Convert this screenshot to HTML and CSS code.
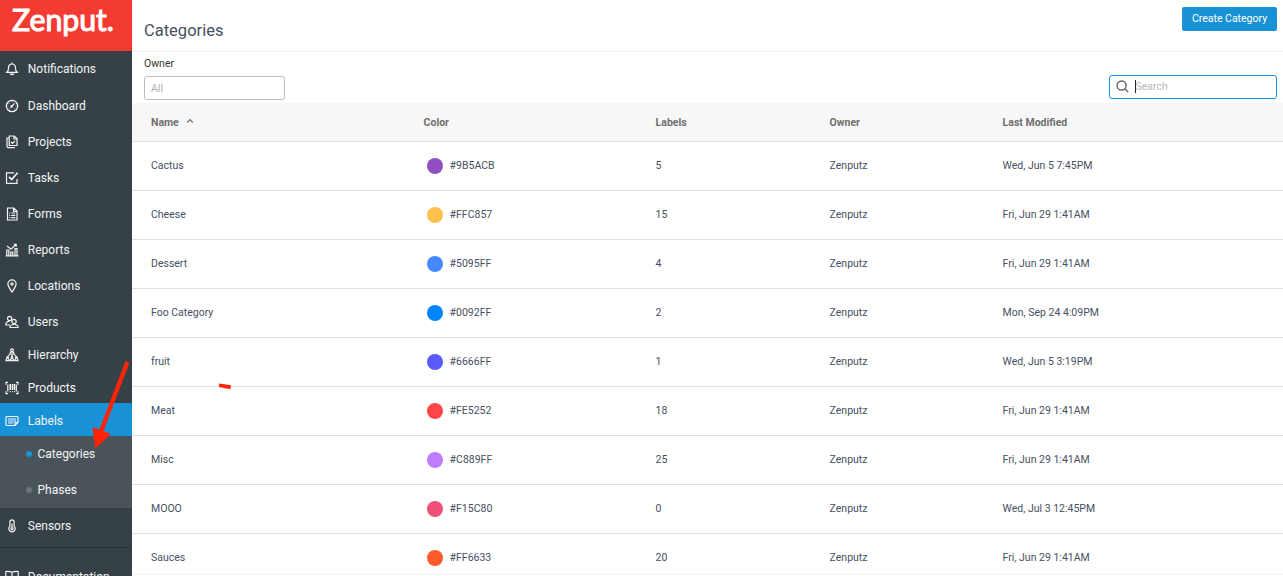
FILE: index.html
```html
<!DOCTYPE html>
<html lang="en">
<head>
  <meta charset="UTF-8">
  <meta name="viewport" content="width=device-width, initial-scale=1.0">
  <title>Categories</title>
  <link rel="stylesheet" href="styles.css">
</head>
<body>

<div class="app">
  <nav class="sidebar">
    <a class="brand" href="#">
      <svg width="132" height="51" viewBox="0 0 132 51"><text class="brand-text" x="12" y="31" textLength="102" lengthAdjust="spacingAndGlyphs">Zenput.</text></svg>
    </a>
    <a class="nav-item" href="#">
      <svg class="icon" viewBox="0 0 14 14"><path d="M.8 10.300h12.400M2 10.300c1.300-1 1.500-2.300 1.500-4.300C3.500 3.500 5 2 7 2s3.500 1.500 3.500 4c0 2 .2 3.300 1.500 4.300M7 .6V2M5.500 12c.5 1 2.500 1 3 0z"/></svg>
      <span>Notifications</span>
    </a>
    <a class="nav-item nav-item-dashboard" href="#">
      <svg class="icon" viewBox="0 0 14 14"><circle cx="7" cy="7" r="5.700"/><path d="M6.500 7.500l3-3.200M7 2.500v.7M3.800 3.800l.5.500M2.500 7h.8M10.800 7h.8M4 9.800l.4-.3M9.800 9.800l-.3-.3"/><circle cx="6.500" cy="7.600" r=".7"/></svg>
      <span>Dashboard</span>
    </a>
    <a class="nav-item" href="#">
      <svg class="icon" viewBox="0 0 14 14"><path d="M4.200 1h5l2.800 2.600V10.500H4.200zM9 1v3h3M4 3H2v8c0 1 .5 1.700 1.500 1.700h6.300M6 7l1.500 1.500L10 6"/></svg>
      <span>Projects</span>
    </a>
    <a class="nav-item" href="#">
      <svg class="icon" viewBox="0 0 14 14"><path d="M9 1.800H1.500v10.500H12V8"/><path class="bold" d="M4 5.800l2.700 2.700L12.600 1.700"/></svg>
      <span>Tasks</span>
    </a>
    <a class="nav-item" href="#">
      <svg class="icon" viewBox="0 0 14 14"><path d="M2.500 1h6.300L12 4v9H2.500zM8.500 1v3.300H12M4.300 6h1M6.300 6h4M4.300 8.300h1M6.300 8.300h4M4.300 10.600h1M6.300 10.600h4"/></svg>
      <span>Forms</span>
    </a>
    <a class="nav-item" href="#">
      <svg class="icon" viewBox="0 0 14 14"><path d="M.7 12.800h12.800M1.800 12.500V7h2v5.500M5.800 12.500V9h2v3.500M10 12.500V5.500h2v7M2 3l4 3.300L11 1.500M8.800 1.300h2.400v2.400"/></svg>
      <span>Reports</span>
    </a>
    <a class="nav-item" href="#">
      <svg class="icon" viewBox="0 0 14 14"><path d="M7 13C5 9.800 2.900 7.500 2.900 5a4.100 4.100 0 0 1 8.200 0c0 2.500-2.100 4.800-4.100 8z"/><circle cx="7" cy="5" r="1.100"/></svg>
      <span>Locations</span>
    </a>
    <a class="nav-item nav-item-users" href="#">
      <svg class="icon" viewBox="0 0 14 14"><circle cx="4.600" cy="3.500" r="2.100"/><circle cx="9" cy="6.500" r="2.200"/><path d="M5 12.500c0-2 1.500-3 4-3s4.200 1 4.200 3zM5 10H.8c0-2.200 1-3.500 3.800-3.800"/></svg>
      <span>Users</span>
    </a>
    <a class="nav-item nav-item-short" href="#">
      <svg class="icon" viewBox="0 0 14 14"><circle cx="7" cy="2.200" r="1.400"/><path d="M5 6c0-1.500.7-2.200 2-2.200S9 4.500 9 6zM7 6v3M5 6L3 8.500M9 6l2 2.500M1 12.700c0-1.500.5-2.200 1.600-2.200s1.600.7 1.600 2.200zM5.400 12.700c0-1.500.5-2.200 1.600-2.200s1.600.7 1.600 2.200zM9.800 12.700c0-1.500.5-2.200 1.600-2.200s1.600.7 1.600 2.200z"/><circle cx="2.600" cy="9.500" r=".8"/><circle cx="7" cy="9.500" r=".8"/><circle cx="11.400" cy="9.500" r=".8"/></svg>
      <span>Hierarchy</span>
    </a>
    <a class="nav-item nav-item-products" href="#">
      <svg class="icon" viewBox="0 0 14 14"><path d="M3 1.300H1v2.500M11 1.300h2v2.500M3 12.700H1v-2.500M11 12.700h2v-2.500M2.800 3.500v7M11.300 3.500v7M7.400 3v6"/><path class="bold" d="M5.300 3v6M9.400 3v6"/><path d="M4.700 10.700h1M7 10.700h.8M9 10.700h1"/></svg>
      <span>Products</span>
    </a>
    <a class="nav-item nav-item-short active" href="#">
      <svg class="icon" viewBox="0 0 14 14"><path d="M2 2.500h10c.6 0 1 .4 1 1v5l-3 3H2c-.6 0-1-.4-1-1v-7c0-.6.4-1 1-1zM13 8.500h-3v3M3 5h8M3 7h8M3 9h5"/></svg>
      <span>Labels</span>
    </a>
    <div class="submenu">
      <a class="submenu-item current" href="#">Categories</a>
      <a class="submenu-item" href="#">Phases</a>
    </div>
    <a class="nav-item" href="#">
      <svg class="icon" viewBox="0 0 14 14"><path d="M4.900 7.300V3a2.100 2.100 0 0 1 4.200 0v4.300a3.200 3.200 0 1 1-4.200 0zM7 4.500v4"/><circle cx="7" cy="9.800" r="1.100"/></svg>
      <span>Sensors</span>
    </a>
    <a class="nav-item nav-item-docs" href="#">
      <svg class="icon" viewBox="0 0 14 14"><path d="M7 2.300C5.500 1.500 3 1.300.8 1.500v10C3 11.200 5.500 11.500 7 12.500c1.500-1 4-1.300 6.200-1v-10C11 1.300 8.500 1.500 7 2.300zM7 2.300v10"/></svg>
      <span>Documentation</span>
    </a>
  </nav>

  <main class="content">
    <header class="page-header">
      <h1 class="page-title">Categories</h1>
      <button class="create-button" type="button">Create Category</button>
    </header>

    <div class="filters">
      <div class="filter-group">
        <label for="owner">Owner</label>
        <input type="text" id="owner" class="owner-input" placeholder="All">
      </div>
      <div class="search-box">
        <svg class="search-icon" viewBox="0 0 14 14"><circle cx="6" cy="6" r="4.900"/><path d="M9.500 9.500L13 13"/></svg>
        <span class="caret"></span>
        <span class="search-placeholder">Search</span>
      </div>
    </div>

    <div class="table-wrap">
      <table class="category-table">
        <colgroup>
          <col class="col-name"><col class="col-color"><col class="col-labels"><col class="col-owner"><col>
        </colgroup>
        <thead>
          <tr>
            <th>Name <svg class="sort-icon" viewBox="0 0 8 6"><path d="M1.200 4.500L4 1.700l2.800 2.800"/></svg></th>
            <th>Color</th><th>Labels</th><th>Owner</th><th>Last Modified</th>
          </tr>
        </thead>
        <tbody>
          <tr><td>Cactus</td><td class="color-cell"><span class="swatch purple"></span>#9B5ACB</td><td>5</td><td>Zenputz</td><td>Wed, Jun 5 7:45PM</td></tr>
          <tr><td>Cheese</td><td class="color-cell"><span class="swatch yellow"></span>#FFC857</td><td>15</td><td>Zenputz</td><td>Fri, Jun 29 1:41AM</td></tr>
          <tr><td>Dessert</td><td class="color-cell"><span class="swatch light-blue"></span>#5095FF</td><td>4</td><td>Zenputz</td><td>Fri, Jun 29 1:41AM</td></tr>
          <tr><td>Foo Category</td><td class="color-cell"><span class="swatch blue"></span>#0092FF</td><td>2</td><td>Zenputz</td><td>Mon, Sep 24 4:09PM</td></tr>
          <tr><td>fruit</td><td class="color-cell"><span class="swatch indigo"></span>#6666FF</td><td>1</td><td>Zenputz</td><td>Wed, Jun 5 3:19PM</td></tr>
          <tr><td>Meat</td><td class="color-cell"><span class="swatch red"></span>#FE5252</td><td>18</td><td>Zenputz</td><td>Fri, Jun 29 1:41AM</td></tr>
          <tr><td>Misc</td><td class="color-cell"><span class="swatch violet"></span>#C889FF</td><td>25</td><td>Zenputz</td><td>Fri, Jun 29 1:41AM</td></tr>
          <tr><td>MOOO</td><td class="color-cell"><span class="swatch pink"></span>#F15C80</td><td>0</td><td>Zenputz</td><td>Wed, Jul 3 12:45PM</td></tr>
          <tr><td>Sauces</td><td class="color-cell"><span class="swatch orange"></span>#FF6633</td><td>20</td><td>Zenputz</td><td>Fri, Jun 29 1:41AM</td></tr>
        </tbody>
      </table>
    </div>
  </main>
</div>

<!-- Arrow and mark drawn over the page -->
<svg class="annotation" width="240" height="400" viewBox="0 0 240 400">
  <path d="M125.500 361l4 1.500-26 68.500 7.300 3-15.500 14.500L92.400 427l7 2.500z"/>
  <path d="M219.200 383.500l11.800 1.800-.7 4-11.500-2.300z"/>
</svg>

</body>
</html>
```
FILE: styles.css
```css
* {
  box-sizing: border-box;
}

body {
  margin: 0;
  font-family: Roboto, sans-serif;
  background-color: #fff;
  color: #465061;
  overflow: hidden;
}

a {
  text-decoration: none;
}

.app {
  display: flex;
  height: 576px;
  overflow: hidden;
}

/* Sidebar */
.sidebar {
  flex: 0 0 132px;
  background-color: #364147;
  overflow: hidden;
}

.brand {
  display: block;
  height: 51px;
  background-color: #f43b32;
}

.brand svg {
  display: block;
}

.brand-text {
  font-family: Lato, sans-serif;
  font-size: 31px;
  fill: #fff;
  stroke: #fff;
  stroke-width: 1.1;
  stroke-linejoin: round;
}

.nav-item {
  display: flex;
  align-items: center;
  height: 36px;
  padding-left: 5px;
  gap: 8.8px;
  color: #f2f4f5;
  font-size: 12px;
}

.nav-item-dashboard {
  height: 37px;
}

.nav-item-users {
  height: 34px;
  padding-top: 2px;
}

.nav-item-short {
  height: 33px;
}

.nav-item-products {
  height: 32px;
  padding-top: 1px;
}

.nav-item.active {
  padding-top: 2px;
  background-color: #1991d6;
}

.nav-item-docs {
  height: 58px;
  margin-top: 3px;
  border-top: 1px solid #2c353a;
}

.icon {
  width: 14px;
  height: 14px;
  fill: none;
  stroke: #f2f4f5;
  stroke-width: 1.2;
}

.icon .bold {
  stroke-width: 1.7;
}

.submenu {
  background-color: #4a535a;
}

.submenu-item {
  display: flex;
  align-items: center;
  height: 36px;
  padding-left: 26px;
  gap: 5.5px;
  color: #f2f4f5;
  font-size: 12px;
}

.submenu-item::before {
  content: "";
  width: 6px;
  height: 6px;
  border-radius: 50%;
  background-color: #707274;
}

.submenu-item.current::before {
  background-color: #1991d6;
}

/* Page header */
.content {
  flex: 1;
}

.page-header {
  display: flex;
  justify-content: space-between;
  align-items: flex-start;
  height: 52px;
  padding: 7px 6px 0 12px;
  border-bottom: 1px solid #f0f0f0;
}

.page-title {
  margin: 14px 0 0;
  font-size: 16.5px;
  font-weight: normal;
  line-height: 19px;
}

.create-button {
  width: 95px;
  height: 24px;
  padding: 0 0 1px;
  border: none;
  border-radius: 2px;
  background-color: #1991d6;
  color: #fff;
  font-family: inherit;
  font-size: 10.5px;
  white-space: nowrap;
}

/* Filters */
.filters {
  display: flex;
  justify-content: space-between;
  height: 51px;
  padding: 5px 6px 0 12px;
}

.filter-group label {
  display: block;
  margin-bottom: 5px;
  color: #333;
  font-size: 10.5px;
  line-height: 14px;
}

.owner-input {
  display: block;
  width: 141px;
  height: 24px;
  padding: 0 6px;
  border: 1px solid #bdbdbd;
  border-radius: 3px;
  font-family: inherit;
  font-size: 10.5px;
}

.owner-input::placeholder {
  color: #b0b0b0;
}

.search-box {
  display: flex;
  align-items: center;
  width: 168px;
  height: 24px;
  margin-top: 18px;
  padding: 0 0 1px 6px;
  border: 1px solid #1991d6;
  border-radius: 3px;
  color: #b8b8b8;
  font-size: 10.5px;
}

.search-icon {
  width: 13px;
  height: 13px;
  margin-right: 6px;
  fill: none;
  stroke: #666;
  stroke-width: 1.5;
}

.caret {
  width: 1px;
  height: 13px;
  margin-right: -0.5px;
  background-color: #222;
}

/* Table */
.table-wrap {
  height: 472px;
  overflow: hidden;
  border-bottom: 1px solid #f0f0f0;
}

.category-table {
  width: 100%;
  border-collapse: separate;
  border-spacing: 0;
  table-layout: fixed;
  font-size: 10.5px;
}

.col-name {
  width: 273px;
}

.col-color {
  width: 232px;
}

.col-labels {
  width: 174px;
}

.col-owner {
  width: 173px;
}

.category-table th,
.category-table td {
  padding: 0 0 0 18.6px;
  border-bottom: 1px solid #e0e0e0;
  text-align: left;
}

.category-table th {
  height: 39px;
  background-color: #f7f7f7;
  color: #707070;
  font-weight: bold;
}

.category-table td {
  height: 49px;
  padding-bottom: 2px;
}

.category-table th:first-child,
.category-table td:first-child {
  padding-left: 19px;
}

.category-table .color-cell {
  padding-bottom: 0;
}

.sort-icon {
  width: 8px;
  height: 6px;
  margin-left: 5px;
  vertical-align: 2px;
  fill: none;
  stroke: #707070;
  stroke-width: 1.2;
}

.swatch {
  display: inline-block;
  width: 16px;
  height: 16px;
  margin: 0 6.6px 0 3.4px;
  border-radius: 50%;
  vertical-align: -5px;
}

.purple { background-color: #904fc2; }
.yellow { background-color: #ffc04c; }
.light-blue { background-color: #4589ff; }
.blue { background-color: #0085ff; }
.indigo { background-color: #5a5aff; }
.red { background-color: #ff4548; }
.violet { background-color: #c07cff; }
.pink { background-color: #f05075; }
.orange { background-color: #ff5a2c; }

/* Overlay drawing */
.annotation {
  position: absolute;
  top: 0;
  left: 0;
  overflow: visible;
  pointer-events: none;
  fill: #ff2408;
}
```
